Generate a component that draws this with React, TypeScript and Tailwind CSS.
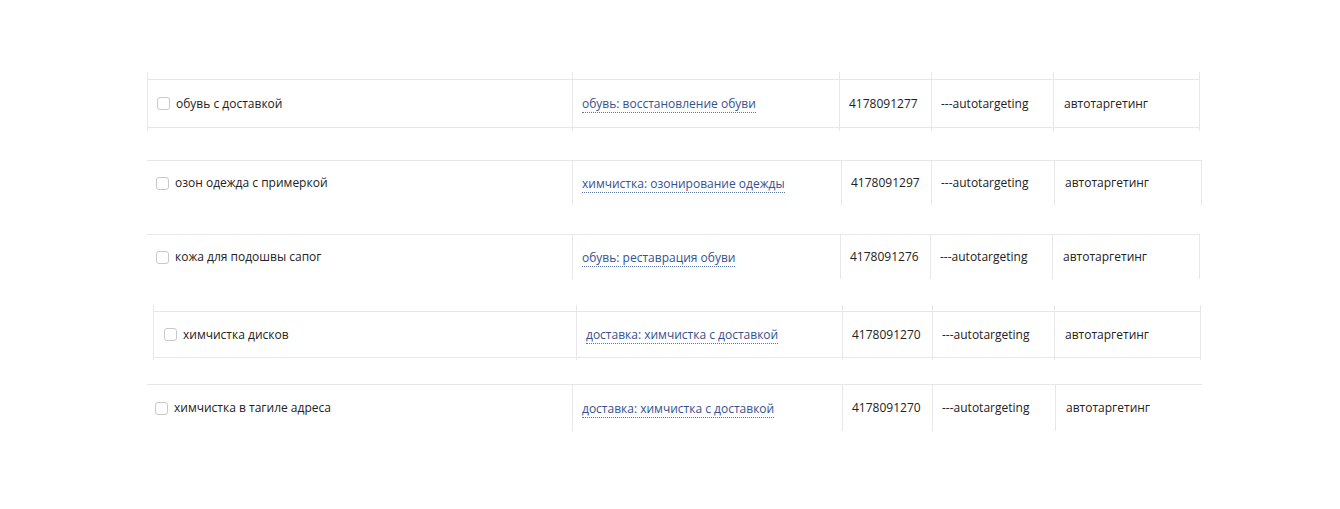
type Row = {
  wrap: string;
  leftBorder: boolean;
  rightBorder: boolean;
  stubTop: string;
  body: string;
  stubBottom: string;
  bottomLine: boolean;
  widths: string[];
  firstPad: string;
  phrase: string;
  group: string;
  id: string;
};

const rows: Row[] = [
  {
    wrap: "mt-0 ml-[147px]",
    leftBorder: true,
    rightBorder: true,
    stubTop: "h-[7px]",
    body: "h-[49px]",
    stubBottom: "h-[3px]",
    bottomLine: true,
    widths: ["w-[425px]", "w-[267px]", "w-[92px]", "w-[122px]", "w-[147px]"],
    firstPad: "pl-[9px]",
    phrase: "обувь с доставкой",
    group: "обувь: восстановление обуви",
    id: "4178091277",
  },
  {
    wrap: "mt-[29px] ml-[147px]",
    leftBorder: false,
    rightBorder: true,
    stubTop: "h-0",
    body: "h-[45px]",
    stubBottom: "h-0",
    bottomLine: false,
    widths: ["w-[425px]", "w-[269px]", "w-[90px]", "w-[123px]", "w-[148px]"],
    firstPad: "pl-[9px]",
    phrase: "озон одежда с примеркой",
    group: "химчистка: озонирование одежды",
    id: "4178091297",
  },
  {
    wrap: "mt-[29px] ml-[147px]",
    leftBorder: false,
    rightBorder: true,
    stubTop: "h-0",
    body: "h-[45px]",
    stubBottom: "h-0",
    bottomLine: false,
    widths: ["w-[425px]", "w-[268px]", "w-[90px]", "w-[122px]", "w-[148px]"],
    firstPad: "pl-[9px]",
    phrase: "кожа для подошвы сапог",
    group: "обувь: реставрация обуви",
    id: "4178091276",
  },
  {
    wrap: "mt-[26px] ml-[153px]",
    leftBorder: true,
    rightBorder: true,
    stubTop: "h-[6px]",
    body: "h-[47px]",
    stubBottom: "h-[2px]",
    bottomLine: true,
    widths: ["w-[423px]", "w-[266px]", "w-[90px]", "w-[122px]", "w-[147px]"],
    firstPad: "pl-[10px]",
    phrase: "химчистка дисков",
    group: "доставка: химчистка с доставкой",
    id: "4178091270",
  },
  {
    wrap: "mt-[24px] ml-[147px]",
    leftBorder: false,
    rightBorder: false,
    stubTop: "h-0",
    body: "h-[47px]",
    stubBottom: "h-0",
    bottomLine: false,
    widths: ["w-[425px]", "w-[270px]", "w-[90px]", "w-[123px]", "w-[147px]"],
    firstPad: "pl-[8px]",
    phrase: "химчистка в тагиле адреса",
    group: "доставка: химчистка с доставкой",
    id: "4178091270",
  },
];

function Cell({
  row,
  index,
  children,
}: {
  row: Row;
  index: number;
  children: React.ReactNode;
}) {
  const last = index === row.widths.length - 1;
  const left = index > 0 || row.leftBorder;
  return (
    <div
      className={
        "flex shrink-0 flex-col border-[#e7e7e7] " +
        row.widths[index] +
        (left ? " border-l" : "") +
        (last && row.rightBorder ? " border-r" : "")
      }
    >
      <div className={row.stubTop} />
      <div
        className={
          "flex items-center border-t border-[#e7e7e7] " +
          row.body +
          (row.bottomLine ? " border-b" : "")
        }
      >
        {children}
      </div>
      <div className={row.stubBottom} />
    </div>
  );
}

export default function App() {
  return (
    <div className="h-[509px] w-full overflow-hidden bg-white pt-[72px] font-['Open_Sans',sans-serif] text-[12px] text-[#222]">
      {rows.map((row, i) => (
        <div key={i} className={"flex " + row.wrap}>
          <Cell row={row} index={0}>
            <div className={"flex items-center gap-[6px] " + row.firstPad}>
              <span className="block h-[13px] w-[13px] rounded-[3px] border border-[#c9c9c9] bg-white" />
              <span>{row.phrase}</span>
            </div>
          </Cell>
          <Cell row={row} index={1}>
            <span className="ml-[9px] mt-[2px] border-b border-dotted border-[#5a74ad] pb-px leading-[15px] text-[#34528f]">
              {row.group}
            </span>
          </Cell>
          <Cell row={row} index={2}>
            <span className="pl-[9px]">{row.id}</span>
          </Cell>
          <Cell row={row} index={3}>
            <span className="pl-[9px]">---autotargeting</span>
          </Cell>
          <Cell row={row} index={4}>
            <span className="pl-[10px]">автотаргетинг</span>
          </Cell>
        </div>
      ))}
    </div>
  );
}
